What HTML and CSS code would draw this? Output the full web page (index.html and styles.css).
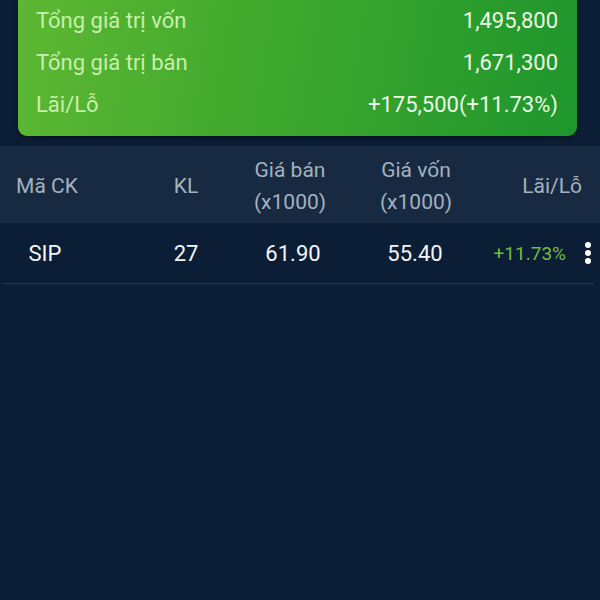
FILE: index.html
```html
<!DOCTYPE html>
<html lang="vi">
<head>
  <meta charset="UTF-8" />
  <title>Danh mục - Lãi/Lỗ</title>
  <link rel="stylesheet" href="styles.css">
</head>
<body>

  <!-- Summary card -->
  <div class="summary">
    <div class="summary-row">
      <span class="label">Tổng giá trị vốn</span>
      <span class="value">1,495,800</span>
    </div>
    <div class="summary-row">
      <span class="label">Tổng giá trị bán</span>
      <span class="value">1,671,300</span>
    </div>
    <div class="summary-row">
      <span class="label">Lãi/Lỗ</span>
      <span class="value">+175,500(+11.73%)</span>
    </div>
  </div>

  <!-- Holdings table -->
  <div class="table-head">
    <div class="c-code">Mã CK</div>
    <div class="c-qty">KL</div>
    <div class="c-sell">Giá bán<br>(x1000)</div>
    <div class="c-cost">Giá vốn<br>(x1000)</div>
    <div class="c-pl">Lãi/Lỗ</div>
  </div>

  <div class="table-row">
    <div class="c-code sym">SIP</div>
    <div class="c-qty">27</div>
    <div class="c-sell">61.90</div>
    <div class="c-cost">55.40</div>
    <div class="c-pl">
      <span class="up">+11.73%</span>
      <span class="more"><i></i><i></i><i></i></span>
    </div>
  </div>

</body>
</html>
```

FILE: styles.css
```css
body {
  margin: 0;
  background: #0c1e35;
  font-family: Roboto, "Noto Sans", sans-serif;
  color: #eef2f6;
  overflow: hidden;
}

.summary {
  margin: -12px 23px 10px 18px;
  padding: 11px 18px 11px 18px;
  border-radius: 9px;
  background: linear-gradient(100deg, #5db832 0%, #3fa82e 45%, #1e962c 100%);
  box-shadow: 0 2px 4px rgba(0,0,0,0.35);
}

.summary-row {
  display: flex;
  justify-content: space-between;
  align-items: center;
  height: 42px;
  font-size: 22px;
}

.summary-row .label {
  color: #c9efad;
}

.summary-row .value {
  color: #ecf7e6;
  padding-right: 1px;
}

.table-head,
.table-row {
  display: flex;
  align-items: center;
  text-align: center;
}

.table-head {
  height: 77px;
  padding-top: 2px;
  box-sizing: border-box;
  background: #172a41;
  color: #a4b1bf;
  font-size: 21px;
  line-height: 32px;
}

.table-row {
  height: 60px;
  margin: 0 6px 0 3px;
  border-bottom: 1px solid #25384f;
  font-size: 22px;
  color: #f2f5f8;
}

.c-code { width: 94px; }
.c-qty  { width: 92px; margin-left: 46px; }
.c-sell { width: 100px; margin-left: 8px; }
.c-cost { width: 100px; margin-left: 26px; }

.c-pl {
  flex: 1;
  text-align: right;
  padding-right: 18px;
}

.table-row .c-code { width: 84px; }
.table-row .c-qty  { margin-left: 53px; }
.table-row .c-sell { margin-left: 11px; }
.table-row .c-cost { margin-left: 22px; }

.table-row .c-pl {
  display: flex;
  align-items: center;
  justify-content: flex-end;
  padding-right: 3px;
}

.up {
  color: #6cbf3c;
  font-size: 19px;
}

.more {
  display: flex;
  flex-direction: column;
  gap: 2px;
  margin-left: 19px;
}

.more i {
  width: 6px;
  height: 6px;
  border-radius: 50%;
  background: #ffffff;
}
```
